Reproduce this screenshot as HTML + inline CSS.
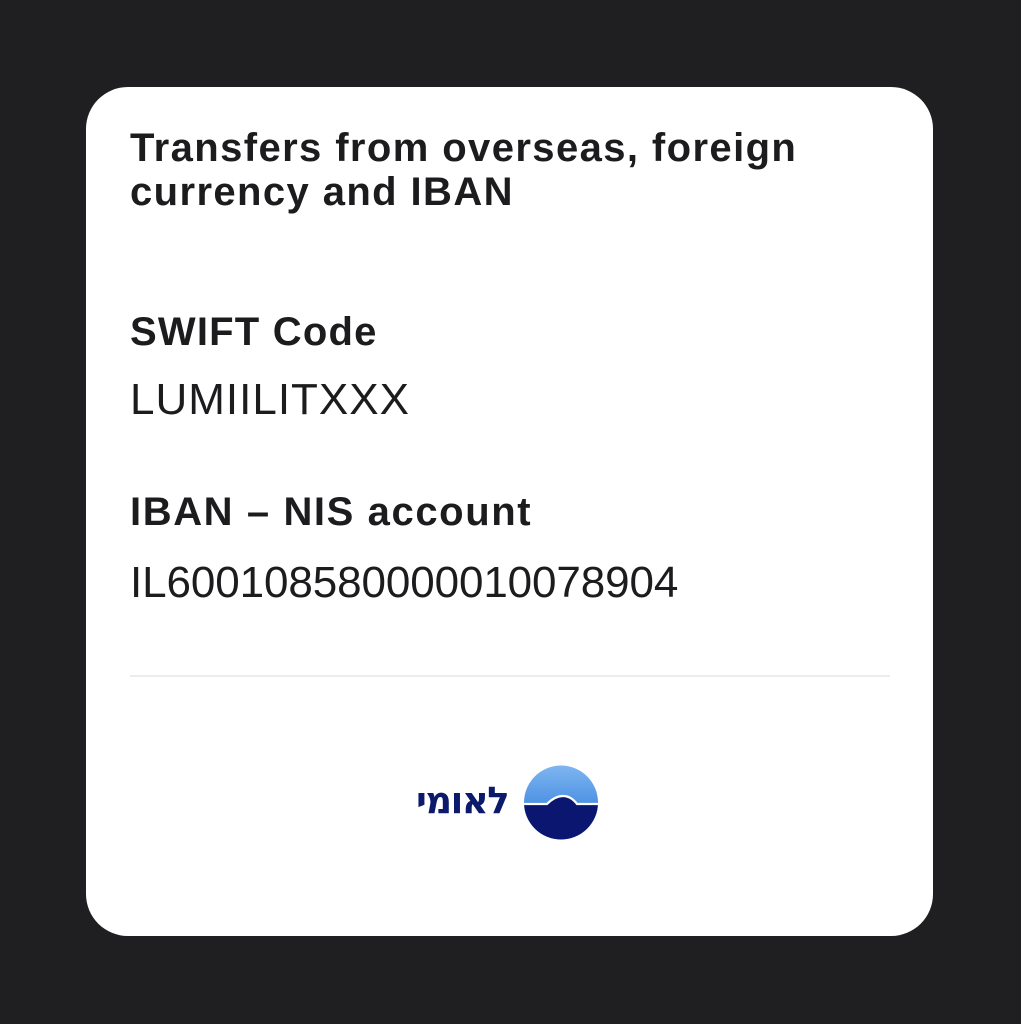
<!DOCTYPE html>
<html><head><meta charset="utf-8"><style>
body{margin:0;width:1021px;height:1024px;background:#1f1f21;position:relative;overflow:hidden;font-family:"Liberation Sans",sans-serif;color:#1c1c1e}
.card{position:absolute;left:86px;top:87px;width:847px;height:849px;background:#fff;border-radius:42px}
.t{position:absolute;left:130px;font-weight:bold;font-size:40px;letter-spacing:1.5px;white-space:nowrap}
.v{position:absolute;left:130px;font-size:44px;white-space:nowrap}
</style></head><body>
<div class="card"></div>
<div class="t" style="top:126px;line-height:44px;letter-spacing:1.4px">Transfers from overseas, foreign<br>currency and IBAN</div>
<div class="t" style="top:310px;letter-spacing:1.2px">SWIFT Code</div>
<div class="v" style="top:375px;letter-spacing:1px">LUMIILITXXX</div>
<div class="t" style="top:490px;letter-spacing:1.6px">IBAN – NIS account</div>
<div class="v" style="top:558px;letter-spacing:-0.1px">IL600108580000010078904</div>
<div style="position:absolute;left:130px;top:675px;width:760px;height:2px;background:#ececec"></div>
<div style="position:absolute;left:416px;top:779px;font:bold 37px 'DejaVu Sans',sans-serif;color:#0b1a6b;direction:rtl;letter-spacing:-1.5px">לאומי</div>
<svg style="position:absolute;left:523px;top:765px" width="76" height="75" viewBox="0 0 76 75">
<defs><linearGradient id="g" x1="0" y1="0" x2="0" y2="1"><stop offset="0" stop-color="#7fb6f0"/><stop offset="1" stop-color="#1f6fd8"/></linearGradient>
<clipPath id="c"><circle cx="38" cy="37.5" r="37"/></clipPath></defs>
<g clip-path="url(#c)">
<rect x="0" y="0" width="76" height="76" fill="url(#g)"/>
<path d="M0 39 L24 39 Q32 31 40 31 Q48 31 54 39 L76 39 L76 76 L0 76Z" fill="#0b1670" stroke="#fff" stroke-width="2.2"/>
</g></svg>
</body></html>
